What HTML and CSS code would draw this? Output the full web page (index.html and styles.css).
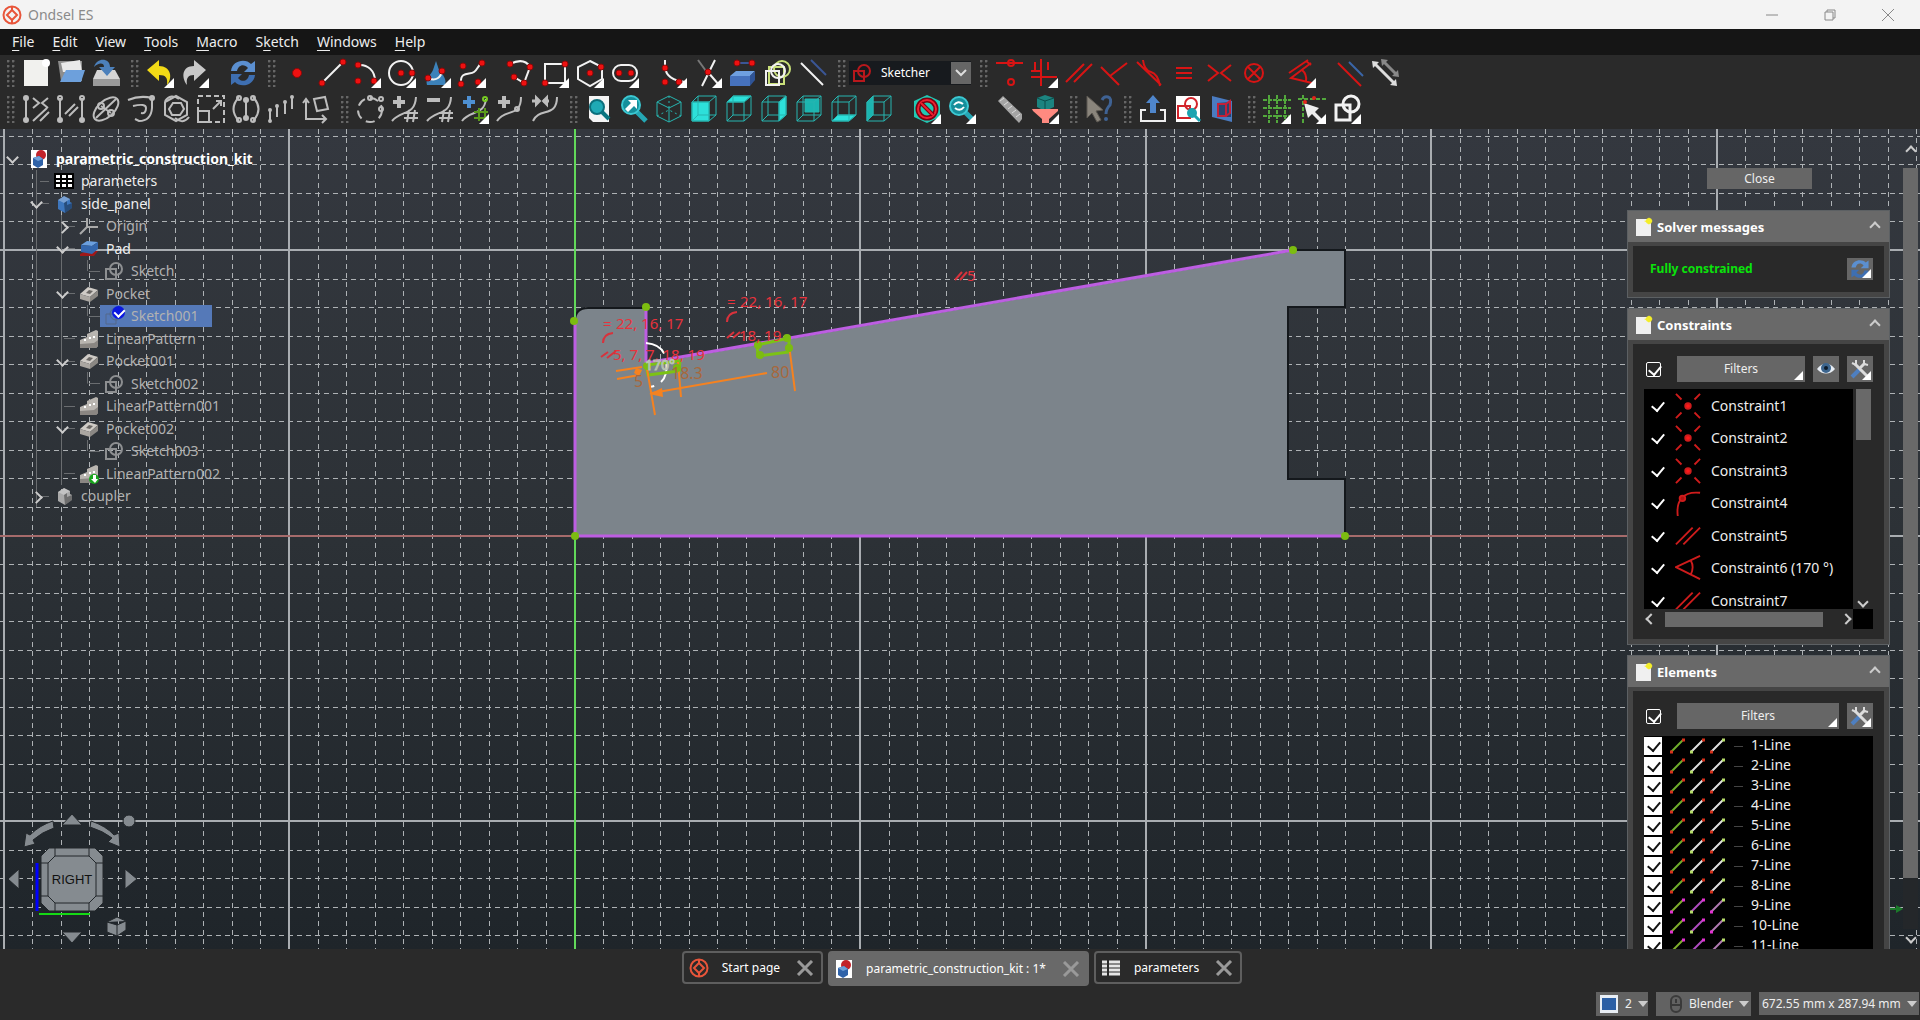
FILE: index.html
```html
<!DOCTYPE html>
<html lang="en">
<head>
<meta charset="utf-8">
<title>Ondsel ES</title>
<link rel="stylesheet" href="styles.css">
</head>
<body>
<svg class="defs" aria-hidden="true">
  <symbol id="logo" viewBox="0 0 20 20"><circle cx="10" cy="10" r="8.500"/><path d="M10 1.500V5M10 15v3.500M10 5l5 5-5 5-5-5z"/></symbol>
  <symbol id="cube" viewBox="0 0 28 28"><path d="M2 7H19V26H2zM2 7L8 1H26L19 7M26 1V20L19 26M8 1V20H26M8 20L2 26"/></symbol>
  <symbol id="sketch" viewBox="0 0 20 20"><path d="M2 8h10v10H2z"/><circle cx="12" cy="8" r="6"/></symbol>
  <symbol id="block" viewBox="0 0 20 20"><path fill="#cfcbc6" d="M1 10l8-7 10 3-8 7z"/><path fill="#aaa6a1" d="M1 10l10 3v5L1 15z"/><path fill="#8b8884" d="M11 13l8-7v6l-8 6z"/><path fill="#6a6764" d="M7 9l3-3 4 1-3 3z"/></symbol>
  <symbol id="pattern" viewBox="0 0 20 20"><path fill="#b9b5b0" d="M1 11l7-3V5l9-4 2 1v15l-2 2H1z"/><path fill="#8a8682" d="M1 15l14-1 4-3v6l-2 2H1z"/><path fill="#fff" d="M5 10h2v2H5zM10 8h2v2h-2zM14 7h2v2h-2z"/></symbol>
  <symbol id="body" viewBox="0 0 20 20"><path d="M4 6l6-4 6 3v3l2 1v5l-7 5-7-4z"/><path fill="#fff" fill-opacity=".3" d="M4 6l6-4 6 3-6 4z"/><path fill="#000" fill-opacity=".35" d="M10 9l3-2v4l5-2v5l-7 5z"/></symbol>
  <symbol id="doc" viewBox="0 0 18 20"><path fill="#fff" d="M1 1h16v18H1z"/><circle cx="11" cy="6" r="5" fill="#c3232b"/><path fill="#2f62a8" d="M3 9l6-2 4 3v6l-5 3-5-3z"/><path fill="#6f9fd8" d="M3 9l6-2 4 3-5 2z"/></symbol>
  <symbol id="note" viewBox="0 0 18 20"><path fill="#f0f0f0" d="M1 2h15v17H1z"/><path fill="#f4ee2a" d="M14 0l1 3 3 1-3 1-1 3-1-2-4-2 4-1z"/><circle cx="14" cy="4" r="3" fill="#f4ee2a"/></symbol>
  <symbol id="tools" viewBox="0 0 26 26"><path fill="none" stroke="#4e7fc0" stroke-width="4" d="M5 21l8-8"/><path fill="none" stroke="#dcdcdc" stroke-width="3" d="M13 12l5-5M8 8l12 12"/><path fill="none" stroke="#dcdcdc" stroke-width="2" d="M5 7l4 2V4M17 4v4l4 1"/></symbol>
  <symbol id="sync" viewBox="0 0 28 28"><path fill="#5b8fd0" d="M2 12C3 1 17-1 22 5l4-3v11H15l4-4c-4-5-10-3-11 3z"/><path fill="#3e6fb2" d="M26 16c-1 11-15 13-20 7l-4 3V15h11l-4 4c4 5 10 3 11-3z"/></symbol>
  <symbol id="eye" viewBox="0 0 26 26"><path fill="#e8eef5" d="M4 13c5-7 13-7 18 0-5 6-13 6-18 0z"/><circle cx="13" cy="12" r="5" fill="#3c658e"/><circle cx="13" cy="12" r="2" fill="#0d1b2a"/></symbol>
  <symbol id="coin" viewBox="0 0 28 28"><path d="M1 1l6 6M27 1l-6 6M1 27l6-6M27 27l-6-6"/><circle cx="14" cy="14" r="3" fill="#ff1a1a"/></symbol>
  <symbol id="tang" viewBox="0 0 28 28"><path d="M3 28C1 12 8 1 27 3"/><circle cx="8" cy="9" r="3" fill="#b01212"/></symbol>
  <symbol id="par" viewBox="0 0 28 28"><path d="M1 23L19 5M9 23L27 5"/></symbol>
  <symbol id="ang" viewBox="0 0 28 28"><path d="M27 1L1 13l26 13M17 6q4 7 0 15"/></symbol>
  <symbol id="lines" viewBox="0 0 58 18"><path stroke="#6fae2c" d="M3 15L15 3"/><path stroke="#ddd" d="M23 15L35 3M43 15L55 3"/><path stroke="#d8321c" stroke-width="3" d="M2 15h3M14 3h3M34 3h3M42 15h3"/><path stroke="#b5dc6a" stroke-width="3" d="M22 15h3M54 3h3"/></symbol>
  <symbol id="linesp" viewBox="0 0 58 18"><path stroke="#7fae2c" d="M3 15L15 3"/><path stroke="#b04cc0" d="M23 15L35 3"/><path stroke="#b07ab0" d="M43 15L55 3"/><path stroke="#e331d2" stroke-width="3" d="M2 15h3M14 3h3M34 3h3M42 15h3"/><path stroke="#b5dc6a" stroke-width="3" d="M22 15h3M54 3h3"/></symbol>
</svg>

<header class="titlebar">
  <svg class="logo" width="20" height="20"><use href="#logo"/></svg>
  <h1>Ondsel ES</h1>
  <div class="winbtns">
    <button aria-label="Minimize"><svg width="14" height="14"><path d="M1 7h12"/></svg></button>
    <button aria-label="Restore"><svg width="14" height="14"><path d="M2 4h8v8H2zM4 4V2h8v8h-2"/></svg></button>
    <button aria-label="Close window"><svg width="14" height="14"><path d="M1 1l12 12M13 1L1 13"/></svg></button>
  </div>
</header>

<nav class="menubar">
  <button><u>F</u>ile</button><button><u>E</u>dit</button><button><u>V</u>iew</button><button><u>T</u>ools</button><button><u>M</u>acro</button><button>S<u>k</u>etch</button><button><u>W</u>indows</button><button><u>H</u>elp</button>
</nav>

<div class="toolbars">
  <div class="toolrow">
    <div class="grp">
      <button aria-label="New"><svg><path fill="#f1f1ee" d="M2 1h24v26H2z"/><circle cx="24" cy="4" r="4" fill="#fff"/></svg></button>
      <button aria-label="Open"><svg><path fill="#8d8d8d" d="M1 2h24v20H4z"/><path fill="#e9e9e9" d="M4 4l19-3 2 12H6z"/><path fill="#6da0dc" d="M9 11h19l-4 12H3z"/></svg></button>
      <button aria-label="Save"><svg><path fill="#d5d5d5" d="M5 11h18l5 9v7H1v-7z"/><path fill="#9a9a9a" d="M1 20h27v7H1z"/><path fill="#4c80bb" d="M2 8C5-2 18-1 18 8h5l-8 9-8-9h5c0-5-6-4-10 0z"/></svg></button>
    </div>
    <div class="grp">
      <button aria-label="Undo" class="m"><svg><path fill="#f2da16" d="M1 11L13 1v6c12 0 14 12 8 19 1-7-1-10-8-10v6z"/></svg></button>
      <button aria-label="Redo" class="m"><svg><path fill="#c9c9c9" d="M25 11L13 1v6C1 7 0 18 6 26c-1-7 1-10 7-10v6z"/></svg></button>
      <button aria-label="Refresh" class="sep"><svg><use href="#sync"/></svg></button>
    </div>
    <div class="grp">
      <button aria-label="Point"><svg class="d"><circle cx="14" cy="14" r="4.500"/></svg></button>
      <button aria-label="Line"><svg class="d"><path d="M4 24L25 3"/><circle cx="4" cy="24" r="3"/><circle cx="25" cy="3" r="3"/></svg></button>
      <button aria-label="Arc" class="m"><svg class="d"><path d="M5 6C15 5 22 12 22 22"/><circle cx="5" cy="6" r="3"/><circle cx="5" cy="22" r="3"/><circle cx="21" cy="22" r="3"/></svg></button>
      <button aria-label="Circle" class="m"><svg class="d"><circle class="o" cx="13" cy="14" r="12"/><circle cx="13" cy="14" r="3"/><circle cx="24" cy="14" r="3"/></svg></button>
      <button aria-label="Conic" class="m"><svg class="d"><path class="drop-shape" d="M13 2l3 9c4 5 8 9 6 15H4c-2-6 4-10 6-15z"/><path d="M5 19c8 4 13-1 14-7"/><circle cx="5" cy="19" r="3"/><circle cx="19" cy="12" r="3"/></svg></button>
      <button aria-label="B-spline" class="m"><svg class="d"><path d="M3 24C2 12 12 16 16 13S20 6 24 4"/><circle cx="5" cy="7" r="3"/><circle cx="24" cy="4" r="3"/><circle cx="3" cy="25" r="3"/><circle cx="20" cy="23" r="3"/></svg></button>
      <button aria-label="Polyline" class="sep"><svg class="d"><path d="M4 5q14-7 20 3l-6 16-10-6"/><circle cx="4" cy="5" r="3"/><circle cx="24" cy="8" r="3"/><circle cx="18" cy="24" r="3"/><circle cx="8" cy="18" r="3"/></svg></button>
      <button aria-label="Rectangle" class="m"><svg class="d"><path d="M4 5h20v19H4z"/><circle cx="24" cy="5" r="3"/><circle cx="4" cy="24" r="3"/></svg></button>
      <button aria-label="Polygon" class="m"><svg class="d"><path d="M14 2l12 6v12l-12 7-12-7V8z"/><circle cx="14" cy="14" r="3"/><circle cx="25" cy="8" r="3"/></svg></button>
      <button aria-label="Slot" class="m"><svg class="d"><rect x="2" y="6" width="24" height="16" rx="8"/><circle cx="8" cy="14" r="3"/><circle cx="20" cy="14" r="3"/></svg></button>
      <button aria-label="Fillet" class="m sep"><svg class="d"><path d="M6 1v8q2 12 20 14"/><circle cx="6" cy="9" r="3"/><circle cx="6" cy="23" r="3"/><circle cx="20" cy="23" r="3"/></svg></button>
      <button aria-label="Trim" class="m"><svg class="d"><path d="M21 1L8 27M13 12l12 14"/><path class="dark" d="M4 1l8 11"/><circle cx="14" cy="13" r="3"/></svg></button>
      <button aria-label="External geometry"><svg class="d"><path class="navy" d="M8 4h15"/><circle cx="8" cy="4" r="3"/><circle cx="23" cy="4" r="3"/><path class="f1" d="M1 17l6-5h19l-5 5z"/><path class="f2" d="M1 17h20v10H1z"/><path class="f3" d="M21 17l5-5v9l-5 6z"/></svg></button>
      <button aria-label="Carbon copy"><svg class="d"><path class="lime" d="M5 8h15v17H5z"/><circle class="o lime" cx="18" cy="10" r="8"/><path d="M2 12h13v14H2z"/><circle class="o" cx="14" cy="12" r="7"/></svg></button>
      <button aria-label="Construction mode"><svg class="d"><path d="M2 4l22 22"/><path class="navy" d="M12 1l15 15"/></svg></button>
    </div>
    <div class="grp">
      <div class="combo"><svg width="20" height="20"><use href="#sketch"/></svg><select aria-label="Workbench"><option>Sketcher</option></select><span class="drop"><svg width="12" height="8"><path d="M1 1l5 5 5-5"/></svg></span></div>
    </div>
    <div class="grp c">
      <button aria-label="Coincident"><svg><path d="M1 4h27"/><circle cx="16" cy="4" r="3"/><circle cx="16" cy="23" r="3"/></svg></button>
      <button aria-label="Horizontal or vertical" class="m"><svg><path d="M11 0v27M1 18h26M5 3v8M1 12h10M18 3v8"/></svg></button>
      <button aria-label="Parallel"><svg><path d="M1 23L19 5M9 23L27 5"/></svg></button>
      <button aria-label="Perpendicular"><svg><path d="M1 8l18 18M27 4L10 17"/></svg></button>
      <button aria-label="Tangent"><svg><path d="M2 3l24 23M8 1q1 10 8 12t9 14"/></svg></button>
      <button aria-label="Equal"><svg><path d="M6 9h16M6 14h16M6 19h16"/></svg></button>
      <button aria-label="Symmetric"><svg><path d="M3 6l10 8-10 8M26 6l-10 8 10 8"/></svg></button>
      <button aria-label="Block"><svg><circle cx="14" cy="14" r="9"/><path d="M8 8l12 12M20 8L8 20"/></svg></button>
      <button aria-label="Dimension" class="m sep"><svg><path d="M23 4L3 19l21 5M1 14L20 1M14 11q5 4 4 11M18 2l5 4"/></svg></button>
      <button aria-label="Driving constraint" class="sep"><svg><path d="M2 4l23 23"/><path stroke="#3a66a8" d="M13 3l14 14"/></svg></button>
      <button aria-label="Activate constraint"><svg><path stroke="#ddd" stroke-width="3" d="M3 4l21 21"/><path stroke="#888" stroke-width="3" d="M12 2l14 14"/><path fill="#ddd" stroke="none" d="M1 2l7 1-6 6zM26 27l-7-1 6-6z"/><path fill="#888" stroke="none" d="M10 0l7 1-6 6zM28 18l-7-1 6-6z"/></svg></button>
    </div>
  </div>
  <div class="toolrow">
    <div class="grp g">
      <button aria-label="Select constraints"><svg><path d="M4 2v24M11 3l6 5-6 5M26 3l-6 5 6 5M11 26l14-13M18 26l9-9"/><circle cx="4" cy="3" r="2"/><circle cx="4" cy="25" r="2"/></svg></button>
      <button aria-label="Select elements"><svg><path d="M3 3v23M25 3v23M8 19L18 9M12 21l9-9"/><circle cx="3" cy="3" r="2"/><circle cx="25" cy="3" r="2"/><circle cx="3" cy="25" r="2"/><circle cx="25" cy="25" r="2"/></svg></button>
      <button aria-label="Show internal geometry"><svg><ellipse cx="14" cy="14" rx="15" ry="8" transform="rotate(-42 14 14)"/><path d="M4 23L24 4M9 11l10 7"/><circle cx="9" cy="11" r="3"/><circle cx="19" cy="18" r="3"/></svg></button>
      <button aria-label="Offset"><svg><path d="M1 5q12-5 24-2v10q-1 13-13 13l-4-2M6 11q13-3 13 2 0 6-5 5"/><circle cx="25" cy="3" r="2"/></svg></button>
      <button aria-label="Rotate"><svg><path d="M14 1l11 6v13l-11 6-11-6V7z"/><path d="M11 8h8l3 6-4 6h-8l-3-6z"/><path d="M3 6q6-8 14-2M27 22q-6 8-14 1"/></svg></button>
      <button aria-label="Scale"><svg><path stroke-dasharray="5 3" d="M1 1h26v26H1z"/><path d="M1 16h11v11H1zM16 14l7-7M19 6h5v5"/></svg></button>
      <button aria-label="Symmetry"><svg><path d="M7 2q-11 12 0 24M21 2q11 12 0 24M14 4v20"/><circle cx="7" cy="3" r="2"/><circle cx="7" cy="25" r="2"/><circle cx="21" cy="3" r="2"/><circle cx="21" cy="25" r="2"/><circle cx="14" cy="5" r="2"/><circle cx="14" cy="23" r="2"/></svg></button>
      <button aria-label="Array"><svg><path d="M3 15v11M10 11v11M18 7v12M25 2v12"/><circle cx="3" cy="15" r="1"/><circle cx="10" cy="11" r="1"/><circle cx="18" cy="7" r="1"/><circle cx="25" cy="2" r="1"/><circle cx="3" cy="26" r="1"/></svg></button>
      <button aria-label="Remove axes alignment"><svg><path d="M4 6v18h19M1 8l3-4 3 4M20 20l4 4-4 4M12 4l11-2 3 12-11 2z"/></svg></button>
    </div>
    <div class="grp g">
      <button aria-label="Convert to B-spline"><svg><circle cx="14" cy="15" r="12" stroke-dasharray="9 5"/><circle cx="14" cy="3" r="2"/><circle cx="25" cy="4" r="2"/><circle cx="25" cy="14" r="2"/></svg></button>
      <button aria-label="Increase degree"><svg><path stroke-width="4" d="M8 1v12M2 7h12"/><path d="M1 26c9-11 23-5 24-24M18 15l-2 12M24 15l-2 12M13 18h14M13 23h14"/></svg></button>
      <button aria-label="Decrease degree"><svg><path stroke-width="4" d="M1 5h13"/><path d="M1 26c9-11 23-5 24-24M18 15l-2 12M24 15l-2 12M13 18h14M13 23h14"/></svg></button>
      <button aria-label="Increase knot multiplicity" class="m"><svg><path stroke="#4e90d2" stroke-width="4" d="M8 1v12M2 7h12"/><path d="M1 26C9 15 23 21 25 4"/><path stroke="#5a9a1a" d="M18 13v13M24 13v13M13 17h14M13 23h14"/><circle cx="24" cy="4" r="2" stroke="#7c2"/></svg></button>
      <button aria-label="Insert knot"><svg><path stroke-width="4" d="M8 1v12M2 7h12"/><path d="M1 26C9 13 25 23 25 2"/><circle cx="21" cy="14" r="2"/></svg></button>
      <button aria-label="Join curves"><svg><path stroke-width="3" d="M1 6h7M18 6h-6"/><path fill="#bdbdbd" d="M5 2l4 4-4 4zM16 2l-4 4 4 4z"/><path d="M2 26C8 12 26 23 26 2"/></svg></button>
    </div>
    <div class="grp">
      <button aria-label="Fit all"><svg><path fill="#f4f4f4" d="M4 1h20v26H8l-4-4z"/><path stroke="#0b7580" stroke-width="4" d="M16 16l8 8"/><circle cx="12" cy="12" r="7" fill="#1fa9b5" stroke="#0b6f7c" stroke-width="2"/></svg></button>
      <button aria-label="Fit selection"><svg><path stroke="#25a7b4" stroke-width="5" d="M16 16l10 10"/><circle cx="11" cy="10" r="9" fill="#168f9b" stroke="#3cc8d2" stroke-width="2"/><path fill="#fff" d="M5 14l6-6-3-3h9v9l-3-3-6 6z"/></svg></button>
      <button aria-label="Isometric"><svg class="q"><path d="M14 1l12 6v14l-12 6-12-6V7zM2 7l12 6 12-6M14 13v14"/><path stroke-dasharray="2 3" d="M14 1v12M2 21l12-6 12 6"/></svg></button>
      <button aria-label="Front"><svg class="q"><path fill="#2de0da" d="M2 7h17v19H2z"/><use href="#cube"/></svg></button>
      <button aria-label="Top"><svg class="q"><path fill="#2de0da" d="M2 7l6-6h18l-7 6z"/><use href="#cube"/></svg></button>
      <button aria-label="Right"><svg class="q"><path fill="#2de0da" d="M19 7l7-6v19l-7 6z"/><use href="#cube"/></svg></button>
      <button aria-label="Rear"><svg class="q"><path fill="#1bb5b0" d="M10 4h14v13H10z"/><use href="#cube"/></svg></button>
      <button aria-label="Bottom"><svg class="q"><path fill="#2de0da" d="M2 26l6-6h18l-7 6z"/><use href="#cube"/></svg></button>
      <button aria-label="Left"><svg class="q"><path fill="#1bb5b0" d="M2 7l6-6v19l-6 6z"/><use href="#cube"/></svg></button>
      <button aria-label="Draw style" class="m sep"><svg><path fill="#20c9b4" d="M14 0l13 6v16l-13 6-13-6V6z"/><circle cx="14" cy="14" r="9" fill="none" stroke="#7a0010" stroke-width="5"/><circle cx="14" cy="14" r="9" fill="none" stroke="#ee2030" stroke-width="2"/><path stroke="#7a0010" stroke-width="4" d="M8 8l12 12"/><path stroke="#ee2030" stroke-width="2" d="M8 8l12 12"/></svg></button>
      <button aria-label="Refresh view" class="m"><svg><path stroke="#25a7b4" stroke-width="5" d="M16 16l9 9"/><circle cx="11" cy="11" r="9" fill="#168f9b" stroke="#3cc8d2" stroke-width="2"/><path fill="none" stroke="#fff" stroke-width="2" d="M6 10q4-5 9-1M16 12q-4 5-9 1"/></svg></button>
      <button aria-label="Measure" class="sep"><svg><path fill="#a5a5a5" d="M2 6l5-5 19 18v5l-3 4z"/><path stroke="#ddd" d="M4 6l4-3M8 10l4-3M12 14l4-3M16 18l4-3M20 22l4-3"/></svg></button>
      <button aria-label="Filter" class="m"><svg><path fill="#1c8480" d="M14 0l9 3v9l-9 4-8-4V3z"/><path stroke="#0b4f4d" fill="none" d="M6 3l8 3 9-3M14 6v9"/><path fill="#ff8a80" d="M1 14h26v2l-9 8v4h-7v-4l-9-8z"/></svg></button>
    </div>
    <div class="grp">
      <button aria-label="What's this"><svg><path fill="#8a857c" stroke="#5d5952" d="M2 1l16 14-7 1 5 9-4 2-5-9-5 5z"/><path fill="none" stroke="#3f6293" stroke-width="3" d="M17 5q2-4 6-3t2 8q-4 4-4 9"/><circle cx="21" cy="24" r="2" fill="#3f6293"/></svg></button>
    </div>
    <div class="grp">
      <button aria-label="Leave sketch"><svg><path fill="none" stroke="#eee" stroke-width="2" d="M7 15H2v11h24V15h-5"/><path fill="#4f86cc" d="M14 0l7 8h-4v10h-6V8H7z"/></svg></button>
      <button aria-label="View sketch"><svg><path fill="#fff" d="M2 1h24v26H2z"/><path fill="none" stroke="#d2232a" stroke-width="2" d="M4 11h12v12H4z"/><circle cx="17" cy="9" r="6" fill="none" stroke="#d2232a" stroke-width="2"/><circle cx="18" cy="18" r="5" fill="#1aa3b0"/><path stroke="#1aa3b0" stroke-width="3" d="M20 20l6 6"/></svg></button>
      <button aria-label="View section"><svg><path fill="#4a7bc0" d="M3 1l20 5v21L3 22z"/><path fill="#29456f" d="M8 8l14-1v15H8z"/><path fill="none" stroke="#c22038" stroke-width="2" d="M9 9h8v12H9zM17 9l4-3v12l-4 3"/></svg></button>
    </div>
    <div class="grp">
      <button aria-label="Grid" class="m"><svg><path stroke="#52a83c" stroke-width="2" stroke-dasharray="4 1" d="M6 0v28M14 0v28M22 0v28M0 5h28M0 13h28M0 21h28"/></svg></button>
      <button aria-label="Snap" class="m"><svg><path stroke="#52a83c" stroke-width="2" stroke-dasharray="4 2" d="M5 0v28M0 4h28"/><path fill="#eee" d="M6 8l15 5-4 4 9 9-3 2-9-9-4 4z"/><circle cx="7" cy="7" r="2" fill="#e3241b"/><circle cx="16" cy="3" r="2" fill="#e3241b"/></svg></button>
      <button aria-label="Rendering order" class="m"><svg class="d thick"><path d="M3 10h14v15H3z"/><circle class="o" cx="18" cy="9" r="8"/></svg></button>
    </div>
  </div>
</div>

<main class="view">
  <svg class="scene" id="scene">
    <g id="grid"></g>
    <g transform="translate(0 -129)">
      <path class="face" d="M575 536V321q0-13 13-13H646V363L1293 250H1345V307H1288V479H1345V536z"/>
      <path class="axis-v" d="M575 129V949"/>
      <path class="axis-h" d="M0 536H1627"/>
      <path class="edge" d="M646 308V363M1293 250L646 363M575 321V536H1345"/>
      <path class="white" d="M646 343q24 2 20 30-3 12-16 14"/>
      <path class="slot" d="M646 365l34-4-1 10-31 4zM757 345l32-7v14l-31 4z"/>
      <path class="dim" d="M646 363l9 52M678 362l3 35M789 345l6 46M652 393l115-20M616 371l26-4M617 379l22-4"/>
      <path class="dimf" d="M649 394l13-6 1 9zM636 368l6 2-3 6-5-3z"/>
      <g class="pts"><circle cx="574" cy="321" r="4"/><circle cx="646" cy="307" r="4"/><circle cx="575" cy="536" r="4"/><circle cx="1345" cy="536" r="4"/><circle cx="1293" cy="250" r="4"/><circle cx="647" cy="366" r="4"/><circle cx="677" cy="368" r="4"/><circle cx="758" cy="345" r="4"/><circle cx="760" cy="355" r="4"/><circle cx="787" cy="338" r="4"/><circle cx="789" cy="348" r="4"/></g>
      <g class="ctext">
        <text x="603" y="329">=</text><text x="616" y="329">22, 16, 17</text>
        <text x="613" y="360">5, 7, 7, 18, 19</text>
        <text x="727" y="307">=</text><text x="740" y="307">22, 16, 17</text>
        <text x="739" y="341">18, 19</text><text x="967" y="281">5</text>
        <path d="M603 343q0-9 10-10M601 357l7-5M607 358l9-7M727 322q0-9 10-10M727 338l7-6M733 338l7-6M955 280l7-8M960 280l7-8"/>
      </g>
      <g class="dtext"><text x="671" y="379">18.3</text><text x="771" y="378">80</text><text x="634" y="387">5</text></g>
      <text class="atext" x="645" y="370">170°</text>
    </g>
  </svg>

  <div class="left">
    <ul class="tree">
      <li class="l0 open root"><svg><use href="#doc"/></svg><span>parametric_construction_kit</span></li>
      <li class="l1 on"><svg><path fill="#fff" d="M0 2h20v16H0z"/><path stroke="#000" stroke-width="2" fill="none" d="M1 3h18v14H1zM1 8h18M1 12h18M7 3v14M13 3v14"/></svg><span>parameters</span></li>
      <li class="l1 open on"><svg fill="#3d76bd"><use href="#body"/></svg><span>side_panel</span></li>
      <li class="l2 shut"><svg><path stroke="#aaa" stroke-width="2" fill="none" d="M8 2v9h11M8 11l-7 7"/></svg><span>Origin</span></li>
      <li class="l2 open on"><svg><path fill="#a01818" d="M1 15l6-3h12l-4 5H1z"/><path fill="#6ba0df" d="M2 6l6-4 11 1-6 4z"/><path fill="#3467ad" d="M2 6l11 1 6-4v7l-6 5-11-2z"/></svg><span>Pad</span></li>
      <li class="l3"><svg class="sk"><use href="#sketch"/></svg><span>Sketch</span></li>
      <li class="l2 open"><svg><use href="#block"/></svg><span>Pocket</span></li>
      <li class="l3 sel"><svg class="sk faint"><use href="#sketch"/></svg><i class="tick"></i><span>Sketch001</span></li>
      <li class="l2"><svg><use href="#pattern"/></svg><span>LinearPattern</span></li>
      <li class="l2 open"><svg><use href="#block"/></svg><span>Pocket001</span></li>
      <li class="l3"><svg class="sk"><use href="#sketch"/></svg><span>Sketch002</span></li>
      <li class="l2"><svg><use href="#pattern"/></svg><span>LinearPattern001</span></li>
      <li class="l2 open"><svg><use href="#block"/></svg><span>Pocket002</span></li>
      <li class="l3"><svg class="sk"><use href="#sketch"/></svg><span>Sketch003</span></li>
      <li class="l2"><svg><use href="#pattern"/><circle cx="15" cy="15" r="5" fill="#18a61c"/><path fill="#fff" d="M14 11h3v4h2l-3 4-4-4h2z"/></svg><span>LinearPattern002</span></li>
      <li class="l1 shut"><svg fill="#a9a9a9"><use href="#body"/></svg><span>coupler</span></li>
    </ul>
    <svg class="nav" viewBox="0 0 150 140" width="150" height="140">
      <g class="navs">
        <path d="M72 9l10 11H62zM72 138l10-11H62zM8 74l11-10v20zM137 74l-12-10v20z"/>
        <path d="M53 16Q40 20 30 30L26 28 24 42 35 39 33 35Q42 27 54 23zM91 16q15 5 23 14l5-2 1 14-12-5 4-4q-9-7-22-11z"/>
        <circle cx="129" cy="16" r="6"/>
        <path d="M49 43H95L103 51V98L95 106H49L41 98V51z"/>
        <path d="M55 51H89L96 58V91L89 98H55L48 91V58zM55 43v8M89 43v8M96 58h7M96 91h7M89 98v8M55 98v8M48 91h-7M48 58h-7"/>
        <path d="M107 117l10-5 9 4v9l-9 6-10-4zM107 117l10 3 9-4M117 120v11"/>
      </g>
      <path stroke="#00f" stroke-width="3" d="M37 58v48"/><path stroke="#15d915" stroke-width="2" d="M39 109h51"/>
      <text x="72" y="79">RIGHT</text>
    </svg>
  </div>

  <aside class="side">
    <button class="close">Close</button>
    <section class="panel">
      <h2><svg width="18" height="20"><use href="#note"/></svg>Solver messages<i class="up"></i></h2>
      <div class="pbody solver"><strong>Fully constrained</strong><button class="ib m" aria-label="Update"><svg viewBox="0 0 28 28" width="20" height="20"><use href="#sync"/></svg></button></div>
    </section>
    <section class="panel">
      <h2><svg width="18" height="20"><use href="#note"/></svg>Constraints<i class="up"></i></h2>
      <div class="pbody">
        <div class="bar"><input type="checkbox" checked aria-label="Enable constraint filter"><button class="filter m">Filters</button><button class="ib" aria-label="Show or hide"><svg width="26" height="26"><use href="#eye"/></svg></button><button class="ib m" aria-label="Constraint settings"><svg width="26" height="26"><use href="#tools"/></svg></button></div>
        <div class="cbox">
          <div class="clist">
            <label><input type="checkbox" checked><svg><use href="#coin"/></svg>Constraint1</label>
            <label><input type="checkbox" checked><svg><use href="#coin"/></svg>Constraint2</label>
            <label><input type="checkbox" checked><svg><use href="#coin"/></svg>Constraint3</label>
            <label><input type="checkbox" checked><svg><use href="#tang"/></svg>Constraint4</label>
            <label><input type="checkbox" checked><svg><use href="#par"/></svg>Constraint5</label>
            <label><input type="checkbox" checked><svg><use href="#ang"/></svg>Constraint6 (170 °)</label>
            <label><input type="checkbox" checked><svg><use href="#par"/></svg>Constraint7</label>
          </div>
          <div class="vbar"><b></b><i class="down"></i></div>
          <div class="hbar"><i class="lt"></i><b></b><i class="rt"></i></div>
          <div class="corner"></div>
        </div>
      </div>
    </section>
    <section class="panel last">
      <h2><svg width="18" height="20"><use href="#note"/></svg>Elements<i class="up"></i></h2>
      <div class="pbody">
        <div class="bar"><input type="checkbox" checked aria-label="Enable element filter"><button class="filter m">Filters</button><button class="ib m" aria-label="Element settings"><svg width="26" height="26"><use href="#tools"/></svg></button></div>
        <div class="elist">
          <label><input type="checkbox" checked><svg><use href="#lines"/></svg>1-Line</label>
          <label><input type="checkbox" checked><svg><use href="#lines"/></svg>2-Line</label>
          <label><input type="checkbox" checked><svg><use href="#lines"/></svg>3-Line</label>
          <label><input type="checkbox" checked><svg><use href="#lines"/></svg>4-Line</label>
          <label><input type="checkbox" checked><svg><use href="#lines"/></svg>5-Line</label>
          <label><input type="checkbox" checked><svg><use href="#lines"/></svg>6-Line</label>
          <label><input type="checkbox" checked><svg><use href="#lines"/></svg>7-Line</label>
          <label><input type="checkbox" checked><svg><use href="#lines"/></svg>8-Line</label>
          <label><input type="checkbox" checked><svg><use href="#linesp"/></svg>9-Line</label>
          <label><input type="checkbox" checked><svg><use href="#linesp"/></svg>10-Line</label>
          <label><input type="checkbox" checked><svg><use href="#linesp"/></svg>11-Line</label>
        </div>
      </div>
    </section>
  </aside>
  <div class="scroll"><i class="up"></i><b></b><i class="down"></i></div>
  <svg class="yaxis" width="14" height="10"><path stroke="#1b7a2a" stroke-width="2" d="M0 5h9"/><path fill="#1b7a2a" d="M6 1l7 4-7 4z"/></svg>
</main>

<div class="tabs">
  <div class="tab"><svg class="logo" width="20" height="20"><use href="#logo"/></svg><a href="#start">Start page</a><button aria-label="Close Start page"><svg width="18" height="16"><path d="M2 1l14 14M16 1L2 15"/></svg></button></div>
  <div class="tab active"><svg width="18" height="20"><use href="#doc"/></svg><a href="#doc">parametric_construction_kit : 1*</a><button aria-label="Close parametric_construction_kit"><svg width="18" height="16"><path d="M2 1l14 14M16 1L2 15"/></svg></button></div>
  <div class="tab"><svg width="20" height="20"><path stroke="#e6e6e6" stroke-width="3" d="M1 4h5M8 4h11M1 8h5M8 8h11M1 12h5M8 12h11M1 16h5M8 16h11"/></svg><a href="#parameters">parameters</a><button aria-label="Close parameters"><svg width="18" height="16"><path d="M2 1l14 14M16 1L2 15"/></svg></button></div>
</div>

<footer class="status">
  <button class="s1"><svg width="20" height="20"><path fill="#e8eef5" d="M1 1h18v18H1z"/><path fill="#2b5fa5" d="M3 4h14v12H3z"/></svg>2<i class="arr"></i></button>
  <button class="s2"><svg width="14" height="20"><rect x="2" y="2" width="10" height="16" rx="5" fill="none" stroke="#3a3a3a" stroke-width="2"/><path stroke="#3a3a3a" stroke-width="2" d="M7 5v4M3 11h8"/></svg>Blender<i class="arr"></i></button>
  <button class="s3">672.55 mm x 287.94 mm<i class="arr"></i></button>
</footer>
<script src="grid.js"></script>
</body>
</html>
```
FILE: styles.css
```css
* { box-sizing: border-box; }
body { margin: 0; height: 100vh; display: flex; flex-direction: column; overflow: hidden; background: #2a2a2a; color: #eee; font: 14px/20px "Noto Sans", "Open Sans", sans-serif; }
button { font: inherit; color: inherit; background: none; border: 0; padding: 0; margin: 0; }
svg { display: block; flex: none; }
.defs { position: absolute; width: 0; height: 0; }
.logo { fill: none; stroke: #e8553a; stroke-width: 2; }

.titlebar { height: 29px; flex: none; display: flex; align-items: center; background: #f3f3f3; padding: 0 3px 0 2px; }
.titlebar h1 { margin: 0 0 0 6px; font-size: 14px; font-weight: 400; color: #8a8a8a; }
.winbtns { margin-left: auto; display: flex; }
.winbtns button { width: 58px; height: 29px; display: grid; place-items: center; }
.winbtns svg { fill: none; stroke: #888; }

.menubar { height: 26px; flex: none; display: flex; background: #151515; padding-left: 3px; }
.menubar button { padding: 0 9px; font-size: 14px; line-height: 26px; }
.menubar u { text-underline-offset: 3px; }

.toolbars { flex: none; padding-bottom: 2px; }
.toolrow { display: flex; height: 36px; }
.grp { display: flex; align-items: center; }
.grp::before { content: ""; width: 8px; height: 27px; margin: 0 3px 0 8px; background: radial-gradient(circle at 1px 1px, #666 1px, transparent 2px) 0 0 / 5px 5px; }
.grp:first-child::before { margin-left: 7px; }
.grp button { width: 35px; height: 36px; display: grid; place-items: center; position: relative; }
.grp button svg { width: 28px; height: 28px; overflow: visible; }
.grp .sep { margin-left: 13px; }
.grp .m::after, .panel .m::after { content: ""; position: absolute; right: 3px; bottom: 3px; border-style: solid; border-width: 0 0 10px 10px; border-color: transparent transparent #fff; }
.d path, .d rect, .d .o { fill: none; stroke: #f2f2f2; stroke-width: 2; }
.d circle { fill: #ee1111; stroke: #8d0808; }
.d circle.o { fill: none; stroke: #f2f2f2; }
.d .drop-shape { fill: #3c82ba; stroke: none; }
.d .dark { stroke: #777; }
.d .navy { stroke: #3a5696; }
.d .lime, .d circle.lime { stroke: #c9e07a; }
.d .f1 { fill: #6fa0e0; stroke: none; }
.d .f2 { fill: #4672bd; stroke: none; }
.d .f3 { fill: #2f5496; stroke: none; }
.thick path, .thick .o { stroke-width: 3; }
.c button svg { fill: none; stroke: #d81414; stroke-width: 2; }
.g svg { fill: none; stroke: #bdbdbd; stroke-width: 2; }
.q { fill: none; stroke: #27b5b0; }
.combo { display: flex; align-items: center; width: 122px; height: 24px; background: #171a1e; padding-left: 3px; margin-right: 1px; }
.combo svg { fill: none; stroke: #b8181c; stroke-width: 2; }
.combo select { appearance: none; flex: 1; min-width: 0; border: 0; background: none; color: #fff; font: 12px/20px "Noto Sans", sans-serif; padding: 0 0 0 9px; }
.drop { width: 20px; height: 22px; display: grid; place-items: center; background: #666; }
.combo .drop svg { stroke: #ddd; }

.view { flex: 1; min-height: 0; position: relative; display: flex; overflow: hidden; background: linear-gradient(#34383f, #2c3136 50%, #1f252a); }
.scene { position: absolute; inset: 0; width: 100%; height: 100%; }
.minor { stroke: #aeb2b5; stroke-dasharray: 5 4; }
.major { stroke: #a9adb1; stroke-width: 2; }
.face { fill: #7c848b; stroke: #14181c; stroke-width: 2; }
.axis-v { stroke: #62d85a; stroke-width: 2; }
.axis-h { stroke: #a66b6b; stroke-width: 2; }
.edge { fill: none; stroke: #bd5ee2; stroke-width: 3; }
.white { fill: none; stroke: #fff; stroke-width: 2; stroke-dasharray: 22 8; }
.slot { fill: none; stroke: #7cc215; stroke-width: 3; }
.dim { stroke: #f58220; stroke-width: 2; }
.dimf { fill: #f58220; }
.pts { fill: #7cbc10; }
.ctext { font-size: 15px; fill: #e8323c; }
.ctext path { fill: none; stroke: #d8323c; stroke-width: 2; }
.dtext { font-size: 16px; fill: #a8683c; }
.atext { font-size: 14px; fill: none; stroke: #b9c4b4; }

.left { position: relative; flex: 1; display: flex; flex-direction: column; justify-content: space-between; align-items: flex-start; }
.tree { list-style: none; margin: 0; padding: 18px 0 0; width: 300px; color: #b2b2b2; }
.tree li { display: flex; align-items: center; height: 22px; position: relative; background-repeat: no-repeat; --v: linear-gradient(#6a6d70, #6a6d70) no-repeat; }
.tree li:nth-child(odd) { height: 23px; }
.tree svg { width: 20px; height: 20px; margin-right: 7px; }
.tree .on { color: #eee; }
.tree .root { font-weight: 700; color: #fff; }
.tree .l0 { padding-left: 29px; }
.tree .l1 { padding-left: 54px; background: var(--v) 36px 0 / 1px 100%, var(--v) 40px 50% / 9px 1px; }
.tree .l2 { padding-left: 79px; background: var(--v) 36px 0 / 1px 100%, var(--v) 61px 0 / 1px 100%, var(--v) 64px 50% / 11px 1px; }
.tree .l3 { padding-left: 104px; background: var(--v) 36px 0 / 1px 100%, var(--v) 61px 0 / 1px 100%, var(--v) 87px 0 / 1px 50%, var(--v) 89px 50% / 11px 1px; }
.open::before, .shut::before { content: ""; position: absolute; top: 6px; width: 7px; height: 7px; border: solid #ccc; border-width: 0 2px 2px 0; transform: rotate(45deg); }
.shut::before { top: 8px; transform: rotate(-45deg); }
.l0::before { left: 8px; }
.l1::before { left: 32px; }
.l2::before { left: 58px; }
.sk { fill: none; stroke: #8d8f91; stroke-width: 2; }
.tree .sk.faint { stroke: #54688a; stroke-width: 1; }
.sel::after { content: ""; position: absolute; z-index: -1; left: 100px; width: 112px; top: 0; bottom: 0; background: #5579b8; }
.sel { z-index: 0; }
.tick { position: absolute; left: 112px; top: 1px; width: 13px; height: 13px; border-radius: 50%; background: #0b18e0; }
.tick::after { content: ""; position: absolute; left: 4px; top: 1px; width: 5px; height: 8px; border: solid #fff; border-width: 0 2px 2px 0; transform: rotate(45deg); }
.nav { margin-bottom: 4px; }
.navs { fill: #858b90; stroke: #22272b; stroke-width: 1; }
.nav text { font: 13px "Liberation Sans", sans-serif; text-anchor: middle; fill: #111; }

.side { position: relative; width: 276px; padding-top: 39px; font-size: 12px; display: flex; flex-direction: column; }
.close { width: 105px; height: 21px; margin: 0 0 21px 80px; background: #666; flex: none; }
.panel { width: 263px; flex: none; margin-bottom: 10px; border: 1px solid #5c6063; background: #454545; }
.panel h2 { display: flex; align-items: center; margin: 0; height: 31px; background: #696969; font-size: 13px; font-weight: 700; line-height: 30px; color: #fff; padding: 0 10px 0 7px; gap: 4px; }
.panel h2 .up { margin-left: auto; }
.pbody { margin: 4px 5px 5px; padding: 12px 11px 10px; background: #292929; }
.solver { display: flex; justify-content: space-between; align-items: center; height: 46px; padding: 0 11px 0 17px; }
.solver strong { color: #0be30b; font-size: 12px; }
.ib, .filter { background: #666; height: 26px; position: relative; }
.ib { width: 26px; display: grid; place-items: center; }
.solver .ib { height: 22px; }
.panel .m::after { right: 2px; bottom: 2px; border-width: 0 0 9px 9px; }
.bar { display: flex; gap: 8px; align-items: center; margin-bottom: 7px; }
.filter { flex: 1; }
.bar input { appearance: none; width: 15px; height: 15px; margin: 0 8px 0 2px; border: 1px solid #fff; border-radius: 2px; position: relative; }
input:checked::after { content: ""; position: absolute; left: 4px; top: 0; width: 6px; height: 10px; border: solid #fff; border-width: 0 2px 2px 0; transform: rotate(40deg); }
.cbox { display: grid; grid-template: 220px 20px / 1fr 20px; }
.clist { background: #000; overflow: hidden; font-size: 14px; }
.clist label { display: flex; align-items: center; height: 32px; white-space: nowrap; }
.clist label:nth-child(odd) { height: 33px; }
.clist svg { width: 26px; height: 26px; margin: 0 10px 0 9px; fill: none; stroke: #cf1c1c; stroke-width: 2; }
.clist input { appearance: none; width: 16px; height: 14px; margin: 0 0 0 6px; position: relative; }
.vbar { display: flex; flex-direction: column; align-items: center; justify-content: space-between; padding-bottom: 3px; }
.vbar b { width: 15px; height: 51px; background: #696969; }
.hbar { display: flex; align-items: center; justify-content: space-between; padding: 0 3px; }
.hbar b { width: 158px; height: 15px; background: #696969; margin-right: 10px; }
.corner { background: #000; }
.up, .down, .lt, .rt { width: 8px; height: 8px; border: solid #ccc; border-width: 2px 0 0 2px; transform: rotate(45deg); }
.down { transform: rotate(225deg); }
.lt { transform: rotate(-45deg); }
.rt { transform: rotate(135deg); }
.elist { background: #000; font-size: 14px; }
.elist label { display: flex; height: 20px; line-height: 18px; align-items: flex-start; position: relative; }
.elist svg { width: 58px; height: 18px; margin: 1px 25px 0 6px; fill: none; stroke-width: 2; }
.elist input { appearance: none; width: 18px; height: 18px; margin: 1px 0 0; background: #fff; position: relative; }
.elist input:checked::after { left: 6px; top: 2px; border-color: #111; }
.elist label::after { content: ""; position: absolute; left: 90px; top: 10px; width: 9px; height: 1px; background: #444; }
.scroll { position: relative; width: 17px; display: flex; flex-direction: column; align-items: center; padding: 18px 2px 7px 0; }
.scroll b { flex: 1; width: 15px; background: #696969; margin: 13px 0 0; }
.scroll::after { content: ""; order: 1; width: 15px; height: 51px; background: #24272a; }
.scroll .down { order: 2; margin-top: 5px; }
.yaxis { position: absolute; right: 16px; bottom: 35px; }

.tabs { height: 41px; flex: none; display: flex; justify-content: center; align-items: flex-start; gap: 5px; padding: 2px 0 0 4px; font-size: 12px; }
.tab { display: flex; align-items: center; height: 33px; padding: 0 7px 0 5px; border: 2px solid #5e5e5e; border-radius: 4px; }
.tab.active { height: 35px; background: #696969; border-color: #696969; }
.tab a { color: #fff; text-decoration: none; margin: 0 16px 0 13px; }
.tab button svg { fill: none; stroke: #999; stroke-width: 3; }

.status { flex: none; height: 30px; display: flex; justify-content: flex-end; gap: 8px; padding: 2px 1px 0 0; font-size: 12px; white-space: nowrap; }
.status button { height: 24px; background: #626262; display: flex; align-items: center; padding: 0 3px; gap: 6px; }
.status .s1 { width: 52px; }
.status .s2 { width: 95px; padding-left: 13px; }
.status .s3 { width: 160px; height: 23px; }
.arr { margin-left: auto; border: solid transparent; border-width: 6px 5px 0; border-top-color: #ccc; }
```
FILE: grid.js
```js
// Draws the sketch grid: a major line every ten minor cells, counted from the origin.
const NS = "http://www.w3.org/2000/svg";
const scene = document.getElementById("scene");
const grid = document.getElementById("grid");
const origin = { x: 575, y: 407 };
const cell = 28.55;

function line(x1, y1, x2, y2, major) {
  const el = document.createElementNS(NS, "path");
  el.setAttribute("d", `M${x1} ${y1}L${x2} ${y2}`);
  el.setAttribute("class", major ? "major" : "minor");
  grid.appendChild(el);
}

function draw() {
  grid.replaceChildren();
  const w = scene.clientWidth, h = scene.clientHeight;
  for (const wantMajor of [false, true]) {
    for (let i = Math.ceil(-origin.x / cell); origin.x + i * cell < w; i++) {
      const major = i % 10 === 0;
      const x = Math.floor(origin.x + i * cell) + (major ? 0 : 0.5);
      if (major === wantMajor) line(x, 0, x, h, major);
    }
    for (let i = Math.ceil(-origin.y / cell); origin.y + i * cell < h; i++) {
      const major = i % 10 === 0;
      const y = Math.floor(origin.y + i * cell) + (major ? 0 : 0.5);
      if (major === wantMajor) line(0, y, w, y, major);
    }
  }
}
draw();
addEventListener("resize", draw);
```
